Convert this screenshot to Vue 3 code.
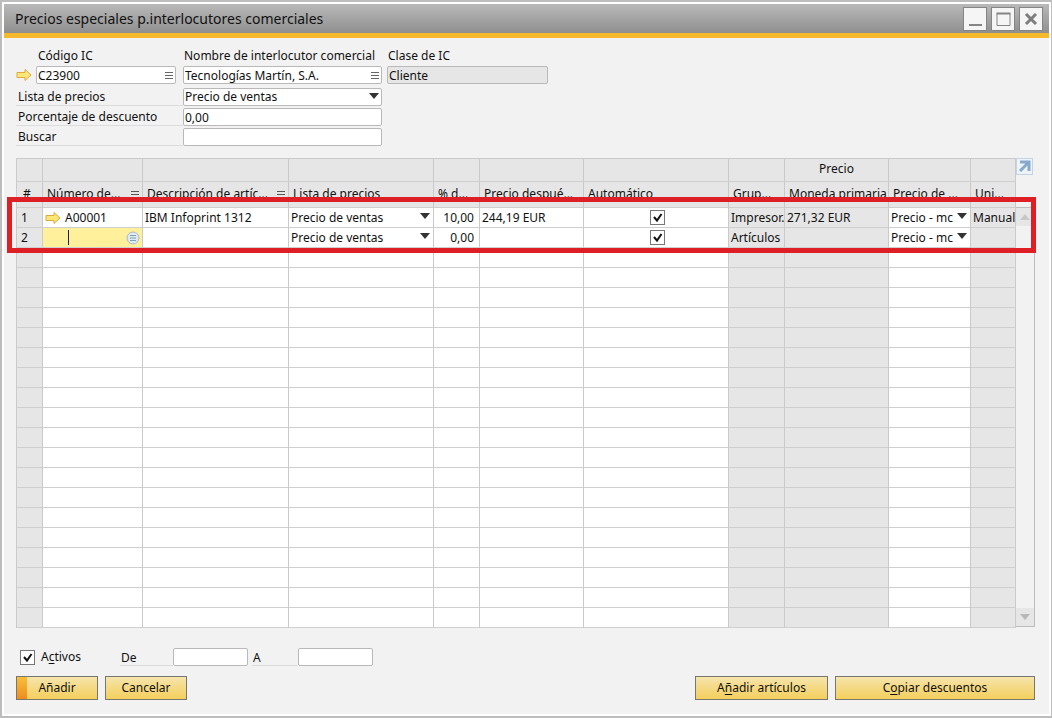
<script setup>
import { ref } from 'vue'

const priceLists = ['Precio de ventas']
const currencies = ['Precio - mc']

const columns = [
  { key: 'n', title: '#', width: 26, grey: true },
  { key: 'item', title: 'Número de...', width: 100, sort: true },
  { key: 'desc', title: 'Descripción de artíc...', width: 146, sort: true },
  { key: 'list', title: 'Lista de precios', width: 145 },
  { key: 'pct', title: '% d...', width: 46 },
  { key: 'after', title: 'Precio despué...', width: 104 },
  { key: 'auto', title: 'Automático', width: 145 },
  { key: 'group', title: 'Grup...', width: 56, grey: true },
  { key: 'primary', title: 'Moneda primaria', top: 'Precio', width: 104, grey: true },
  { key: 'cur', title: 'Precio de ...', width: 82 },
  { key: 'unit', title: 'Uni...', width: 45, grey: true },
]

const rows = ref([
  { n: '1', item: 'A00001', desc: 'IBM Infoprint 1312', list: 'Precio de ventas', pct: '10,00', after: '244,19 EUR', auto: true, group: 'Impresor.', primary: '271,32 EUR', cur: 'Precio - mc', unit: 'Manual' },
  { n: '2', item: '', editing: true, desc: '', list: 'Precio de ventas', pct: '0,00', after: '', auto: true, group: 'Artículos', primary: '', cur: 'Precio - mc', unit: '' },
])
const emptyRows = 19

const code = ref('C23900')
const name = ref('Tecnologías Martín, S.A.')
const kind = ref('Cliente')
const priceList = ref('Precio de ventas')
const discount = ref('0,00')
const search = ref('')
const active = ref(true)
const from = ref('')
const to = ref('')
</script>

<template>
  <main class="window">
    <header class="titlebar">
      <h1>Precios especiales p.interlocutores comerciales</h1>
      <div class="controls">
        <button type="button" aria-label="Minimizar">
          <svg viewBox="0 0 20 20"><path d="M4 16h13" stroke="#858585" stroke-width="2" /></svg>
        </button>
        <button type="button" aria-label="Maximizar">
          <svg viewBox="0 0 20 20"><path d="M4 4.500h13v12h-13z" fill="none" stroke="#858585" /><path d="M3.500 4.500h14" stroke="#858585" stroke-width="2" /></svg>
        </button>
        <button type="button" aria-label="Cerrar">
          <svg viewBox="0 0 20 20"><path d="M5 5l10 10M15 5l-10 10" stroke="#7d7d7d" stroke-width="3" /></svg>
        </button>
      </div>
    </header>

    <div class="body">
      <form class="form" @submit.prevent>
        <div class="partner">
          <div class="field code">
            <label for="code">Código IC</label>
            <div class="box">
              <svg class="arrow" viewBox="0 0 16 12"><path d="M1 3.500h8v-3l6 5.500-6 5.500v-3h-8z" fill="#fce678" stroke="#dbac3c" /></svg>
              <input id="code" v-model="code" type="text" />
              <svg class="lines" viewBox="0 0 8 8"><path d="M0 1.500h8M0 4.500h8M0 7.500h8" stroke="#666" /></svg>
            </div>
          </div>
          <div class="field name">
            <label for="name">Nombre de interlocutor comercial</label>
            <div class="box">
              <input id="name" v-model="name" type="text" />
              <svg class="lines" viewBox="0 0 8 8"><path d="M0 1.500h8M0 4.500h8M0 7.500h8" stroke="#666" /></svg>
            </div>
          </div>
          <div class="field kind">
            <label for="kind">Clase de IC</label>
            <div class="box"><input id="kind" v-model="kind" type="text" readonly /></div>
          </div>
        </div>
        <div class="line">
          <label for="list">Lista de precios</label>
          <div class="box">
            <select id="list" v-model="priceList">
              <option v-for="p in priceLists" :key="p">{{ p }}</option>
            </select>
            <svg class="caret" viewBox="0 0 10 6"><path d="M0 0h10l-5 6z" fill="#333" /></svg>
          </div>
        </div>
        <div class="line">
          <label for="discount">Porcentaje de descuento</label>
          <div class="box"><input id="discount" v-model="discount" type="text" /></div>
        </div>
        <div class="line">
          <label for="search">Buscar</label>
          <div class="box"><input id="search" v-model="search" type="text" /></div>
        </div>
      </form>

      <section class="grid">
        <table>
          <colgroup>
            <col v-for="c in columns" :key="c.key" :style="{ width: c.width + 'px' }" />
          </colgroup>
          <thead>
            <tr class="top">
              <th v-for="c in columns" :key="c.key">{{ c.top }}</th>
            </tr>
            <tr class="titles">
              <th v-for="c in columns" :key="c.key" scope="col">
                <div class="head">
                  <span>{{ c.title }}</span>
                  <svg v-if="c.sort" class="lines" viewBox="0 0 8 8"><path d="M0 1.500h8M0 4.500h8M0 7.500h8" stroke="#555" /></svg>
                </div>
              </th>
            </tr>
          </thead>
          <tbody>
            <tr v-for="r in rows" :key="r.n">
              <td class="grey n">{{ r.n }}</td>
              <td v-if="r.editing" class="editing">
                <div class="edit">
                  <input v-model="r.item" type="text" aria-label="Número de artículo" />
                  <i class="cursor"></i>
                  <svg class="pick" viewBox="0 0 14 14"><circle cx="7" cy="7" r="6" fill="#dfeaf2" stroke="#a9bac6" /><path d="M4 4.500h6M4 7h6M4 9.500h6" stroke="#7f9fbc" /></svg>
                </div>
              </td>
              <td v-else>
                <div class="linked">
                  <svg class="arrow" viewBox="0 0 16 12"><path d="M1 3.500h8v-3l6 5.500-6 5.500v-3h-8z" fill="#fce678" stroke="#dbac3c" /></svg>
                  <span>{{ r.item }}</span>
                </div>
              </td>
              <td>{{ r.desc }}</td>
              <td>
                <div class="pick-list">
                  <select v-model="r.list" aria-label="Lista de precios">
                    <option v-for="p in priceLists" :key="p">{{ p }}</option>
                  </select>
                  <svg class="caret" viewBox="0 0 10 6"><path d="M0 0h10l-5 6z" fill="#333" /></svg>
                </div>
              </td>
              <td class="pct">{{ r.pct }}</td>
              <td>{{ r.after }}</td>
              <td>
                <div class="check centred">
                  <input v-model="r.auto" type="checkbox" aria-label="Automático" />
                  <svg viewBox="0 0 15 15"><path d="M4 7l3 3.500 4.500-6.500" fill="none" stroke="#111" stroke-width="2" /></svg>
                </div>
              </td>
              <td class="grey">{{ r.group }}</td>
              <td class="grey">{{ r.primary }}</td>
              <td>
                <div class="pick-list">
                  <select v-model="r.cur" aria-label="Precio de moneda">
                    <option v-for="p in currencies" :key="p">{{ p }}</option>
                  </select>
                  <svg class="caret" viewBox="0 0 10 6"><path d="M0 0h10l-5 6z" fill="#333" /></svg>
                </div>
              </td>
              <td class="grey">{{ r.unit }}</td>
            </tr>
            <tr v-for="i in emptyRows" :key="'e' + i">
              <td v-for="c in columns" :key="c.key" :class="{ grey: c.grey }"></td>
            </tr>
          </tbody>
        </table>

        <div class="side">
          <button type="button" class="expand" aria-label="Ampliar tabla">
            <svg viewBox="0 0 15 15"><path d="M3 3h9v9M11.500 3.500l-8.500 8.500" fill="none" stroke="#86a9cc" stroke-width="3" /></svg>
          </button>
          <div class="scroll">
            <button type="button" aria-label="Subir"><svg viewBox="0 0 10 6"><path d="M0 6h10l-5-6z" fill="#c8c8c8" /></svg></button>
            <button type="button" aria-label="Bajar"><svg viewBox="0 0 10 6"><path d="M0 0h10l-5 6z" fill="#b8b8b8" /></svg></button>
          </div>
        </div>
        <div class="highlight"></div>
      </section>

      <div class="range">
        <label class="active">
          <span class="check">
            <input v-model="active" type="checkbox" />
            <svg viewBox="0 0 15 15"><path d="M4 7l3 3.500 4.500-6.500" fill="none" stroke="#111" stroke-width="2" /></svg>
          </span>
          <span>A<u>c</u>tivos</span>
        </label>
        <label class="tag from" for="from">De</label>
        <div class="box"><input id="from" v-model="from" type="text" /></div>
        <label class="tag to" for="to">A</label>
        <div class="box"><input id="to" v-model="to" type="text" /></div>
      </div>

      <footer class="actions">
        <button type="button" class="main">Añadir</button>
        <button type="button" class="cancel">Cancelar</button>
        <button type="button" class="add">A<u>ñ</u>adir artículos</button>
        <button type="button" class="copy">C<u>o</u>piar descuentos</button>
      </footer>
    </div>
  </main>
</template>

<style>
body {
  background: #f2f2f2;
}
</style>

<style scoped>
* {
  box-sizing: border-box;
}
.window {
  min-height: 100vh;
  padding: 2px;
  border: 2px solid #bdbdbd;
  border-right-width: 1px;
  background: #fff;
  display: flex;
  flex-direction: column;
  font: 12px/16px "Noto Sans", sans-serif;
  color: #111;
}
input,
select,
button {
  font: inherit;
  color: inherit;
  margin: 0;
}
svg {
  display: block;
  flex: none;
}
.titlebar {
  display: flex;
  align-items: center;
  justify-content: space-between;
  height: 34px;
  padding: 0 6px 0 11px;
  background: linear-gradient(#b9b9b9, #8f8f8f);
  border-bottom: 5px solid #f6b92c;
}
h1 {
  margin: 0;
  font-size: 14px;
  line-height: 20px;
  font-weight: 400;
}
.controls {
  display: flex;
  gap: 4px;
}
.controls button {
  width: 24px;
  height: 24px;
  padding: 1px;
  border: 1px solid #858585;
  background: #f5f5f5;
}
.controls svg {
  width: 20px;
  height: 20px;
}
.body {
  flex: 1;
  padding: 10px 14px 10px 12px;
  background: #f2f2f2;
}
.partner {
  display: grid;
  grid-template-columns: 167px 204px 161px;
  margin-bottom: 4px;
}
.field label {
  display: block;
  margin-bottom: 2px;
  padding-left: 1px;
}
.code {
  width: 160px;
}
.field.code label {
  padding-left: 22px;
}
.name {
  width: 199px;
}
.box {
  position: relative;
  display: flex;
  align-items: center;
}
.box input,
.box select {
  flex: 1;
  min-width: 0;
  width: 100%;
  height: 18px;
  padding: 0 1px;
  border: 1px solid #b9b9b9;
  border-radius: 2px;
  background-color: #fff;
}
.kind .box input {
  background-color: #e6e6e6;
}
.arrow {
  width: 16px;
  height: 12px;
}
.code .arrow {
  margin-right: 4px;
}
.lines {
  width: 8px;
  height: 8px;
}
.box .lines {
  position: absolute;
  right: 3px;
}
select {
  appearance: none;
  border-radius: 0;
}
.caret {
  position: absolute;
  right: 3px;
  top: 5px;
  width: 10px;
  height: 6px;
  pointer-events: none;
}
.line {
  display: grid;
  grid-template-columns: 167px 199px;
  margin-bottom: 2px;
}
.line label {
  height: 18px;
  padding-left: 2px;
  line-height: 18px;
  border-bottom: 1px solid #dcdcdc;
}
.grid {
  position: relative;
  display: flex;
  margin-top: 12px;
}
table {
  flex: 1;
  min-width: 0;
  width: 100%;
  table-layout: fixed;
  border-collapse: separate;
  border-spacing: 0;
  border-top: 1px solid #cacaca;
  border-left: 1px solid #cacaca;
}
th {
  padding: 0;
  font-weight: 400;
  background: #e6e6e6;
  border-right: 1px solid #c9c9c9;
  border-bottom: 1px solid #cfcfcf;
  white-space: nowrap;
  overflow: hidden;
}
.top th {
  height: 23px;
  padding-bottom: 2px;
}
.titles th {
  height: 26px;
  padding-bottom: 2px;
}
.head {
  display: flex;
  align-items: center;
  justify-content: space-between;
  padding: 0 3px 0 4px;
}
.titles th:first-child .head {
  padding-left: 6px;
}
.titles th:nth-child(9) .head {
  padding-right: 0;
}
td {
  height: 20px;
  padding: 0 0 0 2px;
  background: #fff;
  border-right: 1px solid #cacaca;
  border-bottom: 1px solid #cfcfcf;
  white-space: nowrap;
  overflow: hidden;
  line-height: 16px;
}
td.grey {
  background: #e6e6e6;
}
td.n {
  padding-left: 4px;
}
td.pct {
  padding-right: 5px;
  text-align: right;
}
.linked {
  display: flex;
  align-items: center;
  gap: 4px;
}
td.editing {
  padding: 0;
  background: #fff09c;
}
.edit {
  position: relative;
  display: flex;
  align-items: center;
  padding-right: 2px;
}
.edit input {
  flex: 1;
  min-width: 0;
  height: 18px;
  padding: 0 0 0 24px;
  border: 0;
  background: transparent;
}
.cursor {
  position: absolute;
  left: 25px;
  top: 1px;
  width: 1px;
  height: 15px;
  background: #222;
}
.pick {
  width: 14px;
  height: 14px;
}
.pick-list {
  position: relative;
}
.pick-list select {
  display: block;
  width: 100%;
  height: 18px;
  padding: 0;
  border: 0;
  background: transparent;
}
.pick-list .caret {
  top: 4px;
}
.check {
  position: relative;
  display: block;
  width: 15px;
  height: 15px;
}
.centred {
  margin: 0 auto;
}
.check input {
  display: block;
  appearance: none;
  width: 15px;
  height: 15px;
  border: 1px solid #777;
  background: #fff;
}
.check svg {
  position: absolute;
  inset: 0;
  width: 15px;
  height: 15px;
  pointer-events: none;
}
.check input:not(:checked) + svg {
  display: none;
}
.side {
  width: 20px;
  display: flex;
  flex-direction: column;
}
.expand {
  width: 17px;
  height: 17px;
  padding: 0;
  border: 1px solid #c3d5e5;
  background: #eef3f8;
}
.expand svg {
  width: 15px;
  height: 15px;
}
.scroll {
  flex: 1;
  margin: 32px 0 1px;
  display: flex;
  flex-direction: column;
  justify-content: space-between;
  border: 1px solid #bdbdbd;
  border-left: 0;
  background: #f2f2f2;
}
.scroll button {
  display: grid;
  place-items: center;
  height: 18px;
  padding: 0;
  border: 0;
  background: #e6e6e6;
}
.scroll svg {
  width: 10px;
  height: 6px;
}
.highlight {
  position: absolute;
  top: 39px;
  left: -9px;
  right: -1px;
  height: 56px;
  border: 5px solid #df1f26;
  pointer-events: none;
}
.range {
  display: flex;
  align-items: center;
  margin-top: 20px;
  padding-left: 4px;
}
.active {
  display: flex;
  align-items: center;
  gap: 6px;
  width: 100px;
}
u {
  text-underline-offset: 2px;
}
.range .box {
  width: 75px;
}
.tag {
  height: 18px;
  line-height: 20px;
  padding-left: 1px;
  border-bottom: 1px solid #dcdcdc;
}
.from {
  width: 53px;
}
.to {
  width: 46px;
  margin-left: 4px;
}
.actions {
  display: flex;
  gap: 7px;
  margin-top: 10px;
}
.actions button {
  height: 24px;
  padding: 0;
  border: 1px solid #77766f;
  background: linear-gradient(#f6e5ac, #f4cf5c);
}
.main,
.cancel {
  width: 82px;
}
.actions .main {
  background: linear-gradient(#f8bf3a, #ee8d1c) 0 0 / 10px 100% no-repeat, linear-gradient(#f6e5ac, #f4cf5c);
}
.add {
  width: 133px;
  margin-left: auto;
}
.copy {
  width: 200px;
}
</style>
